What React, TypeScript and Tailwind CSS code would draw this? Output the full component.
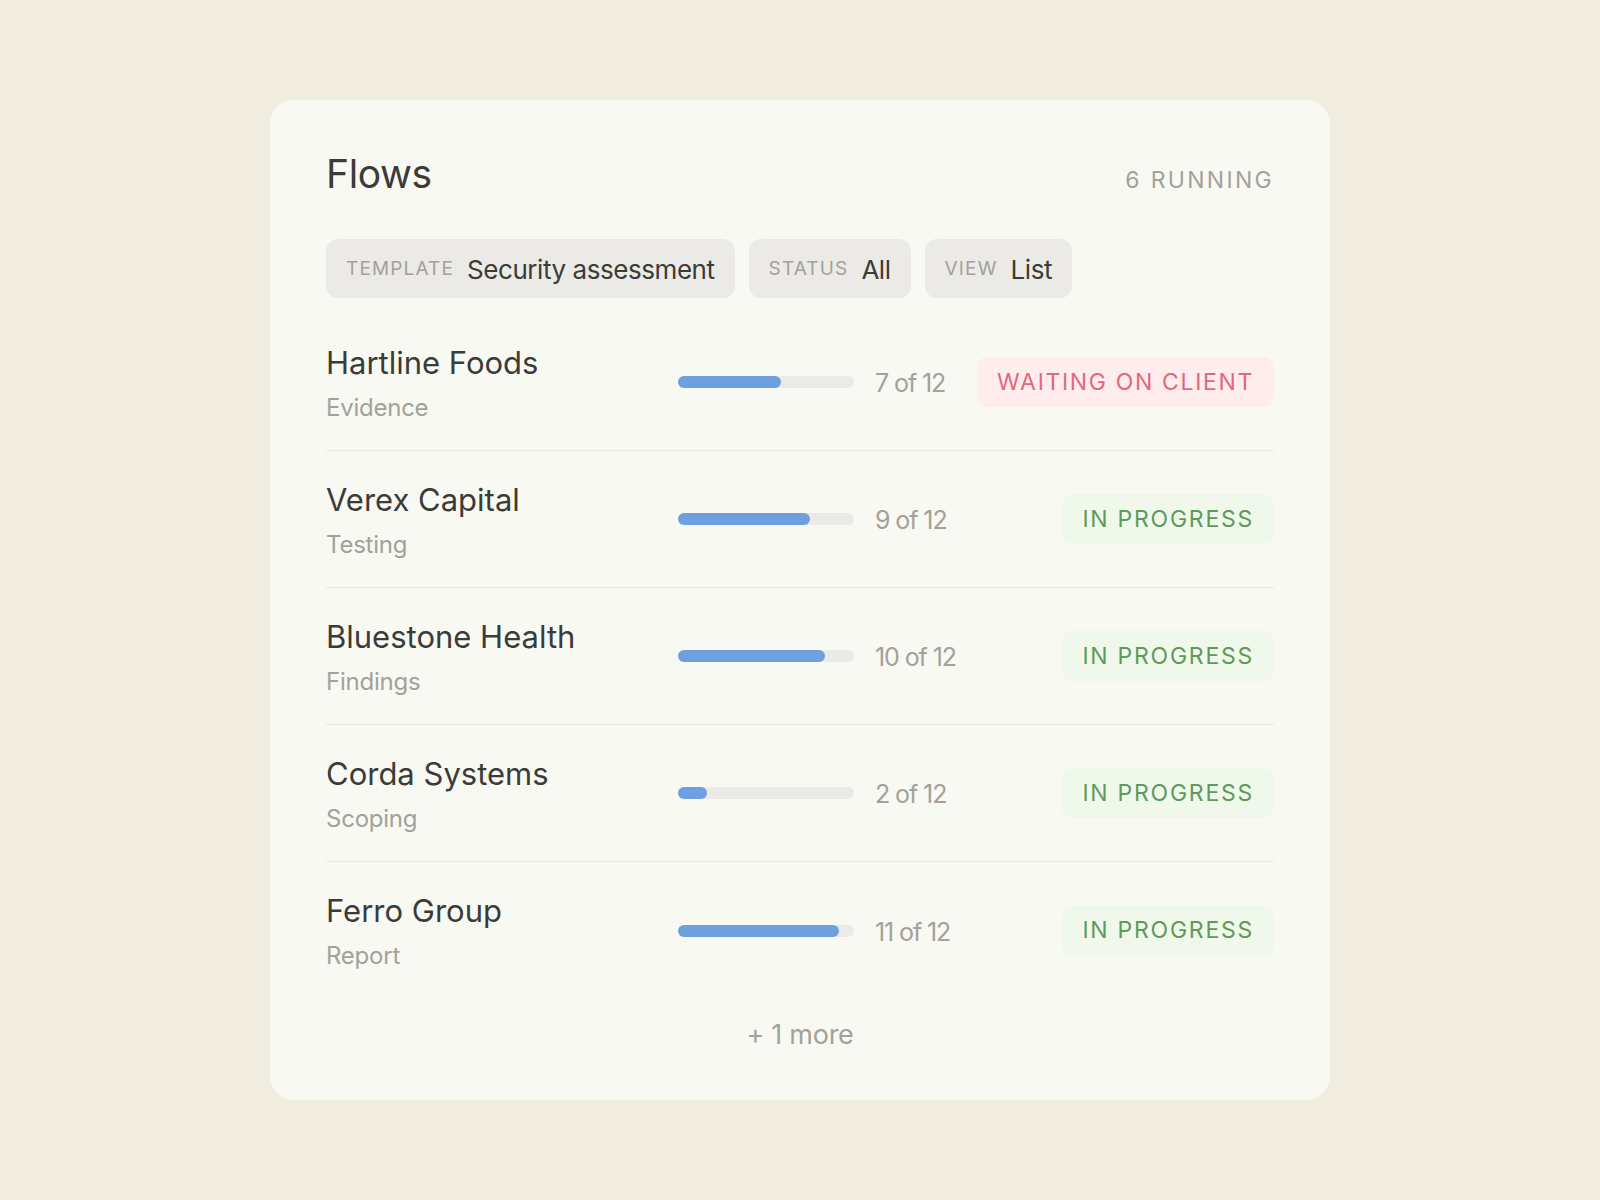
const flows = [
  { name: "Hartline Foods", stage: "Evidence", done: 7, waiting: true },
  { name: "Verex Capital", stage: "Testing", done: 9, waiting: false },
  { name: "Bluestone Health", stage: "Findings", done: 10, waiting: false },
  { name: "Corda Systems", stage: "Scoping", done: 2, waiting: false },
  { name: "Ferro Group", stage: "Report", done: 11, waiting: false },
]

function Chip({ label, value }: { label: string; value: string }) {
  return (
    <div className="flex h-[59px] items-center gap-[13px] rounded-[12px] bg-[#ebeae6] px-[20px] pt-[2px]">
      <span className="text-[19px] tracking-[0.06em] text-[#a3a199]">{label}</span>
      <span className="text-[26px] tracking-[-0.017em] text-[#3b3b37]">{value}</span>
    </div>
  )
}

export default function App() {
  return (
    <div className="flex h-[1200px] items-center justify-center bg-[#f0ece0] font-['Inter',sans-serif]">
      <div className="flex h-[1000px] w-[1060px] flex-col rounded-[24px] bg-[#f9f9f4] px-[56px] pt-[48px]">
        <div className="flex items-center justify-between">
          <h1 className="text-[39px] leading-[52px] font-normal tracking-[-0.01em] text-[#3b3b37]">Flows</h1>
          <span className="mt-[12px] text-[23px] tracking-[0.1em] text-[#a3a199]">6 RUNNING</span>
        </div>

        <div className="mt-[39px] flex gap-[14px]">
          <Chip label="TEMPLATE" value="Security assessment" />
          <Chip label="STATUS" value="All" />
          <Chip label="VIEW" value="List" />
        </div>

        <div className="mt-[16px]">
          {flows.map((flow) => (
            <div key={flow.name} className="flex h-[137px] items-center border-b border-[#e8e7e2] last:border-b-0">
              <div className="w-[352px] pt-[2px]">
                <div className="text-[31px] leading-[40px] text-[#3b3b37]">{flow.name}</div>
                <div className="mt-[9px] text-[24px] leading-[32px] tracking-[-0.01em] text-[#a3a199]">{flow.stage}</div>
              </div>
              <div className="h-[12px] w-[176px] rounded-full bg-[#ebeae6]">
                <div
                  className="h-full rounded-full bg-[#6ea0e0]"
                  style={{ width: `${(flow.done / 12) * 100}%` }}
                />
              </div>
              <span className="mt-[4px] ml-[21px] text-[25px] tracking-[-0.044em] text-[#a3a199]">{flow.done} of 12</span>
              {flow.waiting ? (
                <span className="ml-auto flex h-[50px] items-center rounded-[10px] bg-[#ffecec] px-[20px] text-[23px] tracking-[0.072em] text-[#e0697f]">
                  WAITING ON CLIENT
                </span>
              ) : (
                <span className="ml-auto flex h-[50px] items-center rounded-[10px] bg-[#eff8ea] px-[20px] text-[23px] tracking-[0.076em] text-[#5f9a5c]">
                  IN PROGRESS
                </span>
              )}
            </div>
          ))}
        </div>

        <div className="mt-[16px] text-center text-[27px] leading-[40px] tracking-[-0.01em] text-[#a3a199]">+ 1 more</div>
      </div>
    </div>
  )
}
